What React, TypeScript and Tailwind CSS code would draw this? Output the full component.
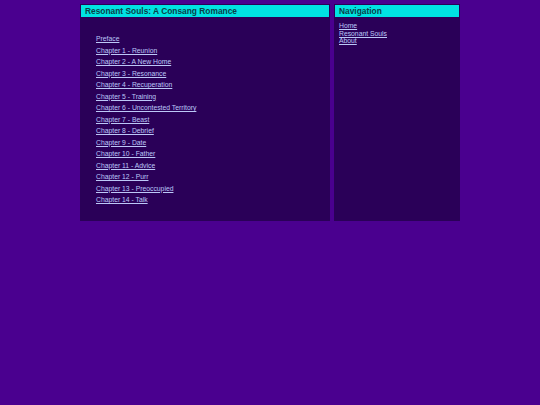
import React from "react";

const chapters = [
  "Preface",
  "Chapter 1 - Reunion",
  "Chapter 2 - A New Home",
  "Chapter 3 - Resonance",
  "Chapter 4 - Recuperation",
  "Chapter 5 - Training",
  "Chapter 6 - Uncontested Territory",
  "Chapter 7 - Beast",
  "Chapter 8 - Debrief",
  "Chapter 9 - Date",
  "Chapter 10 - Father",
  "Chapter 11 - Advice",
  "Chapter 12 - Purr",
  "Chapter 13 - Preoccupied",
  "Chapter 14 - Talk",
];

const nav = ["Home", "Resonant Souls", "About"];

export default function App() {
  return (
    <div
      className="min-h-[405px] w-full bg-[#4a008f] pt-[4px]"
      style={{ fontFamily: '"Liberation Sans", Arial, sans-serif' }}
    >
      <div className="mx-auto flex w-[380px] items-stretch gap-[4px]">
        <div className="w-[250px] bg-[#2a0058] p-[1px]">
          <div className="flex h-[12px] items-center bg-[#00e2e2] px-[4px] text-[8.4px] font-bold leading-none text-[#0a3f48]">
            Resonant Souls: A Consang Romance
          </div>
          <div className="px-[15px] pt-[16px] pb-[14px]">
            {chapters.map((c) => (
              <div key={c} className="text-[6.8px] leading-[11.5px]">
                <a href="#" className="text-[#bcc8f8] underline">
                  {c}
                </a>
              </div>
            ))}
          </div>
        </div>
        <div className="w-[126px] bg-[#2a0058] p-[1px]">
          <div className="flex h-[12px] items-center bg-[#00e2e2] px-[4px] text-[8.4px] font-bold leading-none text-[#0a3f48]">
            Navigation
          </div>
          <div className="px-[4px] pt-[5px]">
            {nav.map((n) => (
              <div key={n} className="text-[6.8px] leading-[7.6px]">
                <a href="#" className="text-[#bcc8f8] underline">
                  {n}
                </a>
              </div>
            ))}
          </div>
        </div>
      </div>
    </div>
  );
}
